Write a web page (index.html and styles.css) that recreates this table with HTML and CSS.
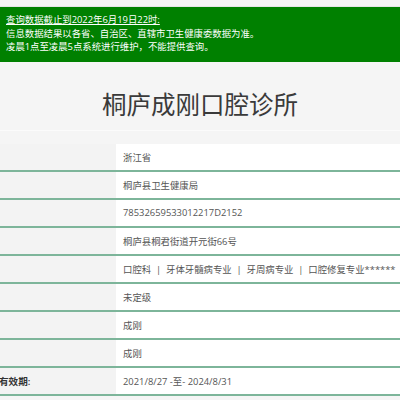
FILE: index.html
```
<!DOCTYPE html>
<html lang="zh-CN">
<head>
<meta charset="utf-8">
<link rel="stylesheet" href="styles.css">
</head>
<body>
<div class="top"></div>
<div class="notice">
  <div class="notice-line underline">查询数据截止到2022年6月19日22时:</div>
  <div class="notice-line">信息数据结果以各省、自治区、直辖市卫生健康委数据为准。</div>
  <div class="notice-line">凌晨1点至凌晨5点系统进行维护，不能提供查询。</div>
</div>
<div class="title">桐庐成刚口腔诊所</div>
<div class="table">
  <div class="row"><div class="label"></div><div class="value">浙江省</div></div>
  <div class="row"><div class="label"></div><div class="value">桐庐县卫生健康局</div></div>
  <div class="row"><div class="label"></div><div class="value">78532659533012217D2152</div></div>
  <div class="row"><div class="label"></div><div class="value">桐庐县桐君街道开元街66号</div></div>
  <div class="row"><div class="label"></div><div class="value">口腔科 &nbsp;|&nbsp; 牙体牙髓病专业 &nbsp;|&nbsp; 牙周病专业 &nbsp;|&nbsp; 口腔修复专业******</div></div>
  <div class="row"><div class="label"></div><div class="value">未定级</div></div>
  <div class="row"><div class="label"></div><div class="value">成刚</div></div>
  <div class="row"><div class="label"></div><div class="value">成刚</div></div>
  <div class="row"><div class="label"><span class="label-text">有效期:</span></div><div class="value">2021/8/27 -至- 2024/8/31</div></div>
</div>
</body>
</html>
```
FILE: styles.css
```
html, body {
  margin: 0;
  padding: 0;
  background: #f5f5f5;
  font-family: "Open Sans", "Noto Sans CJK SC", sans-serif;
  overflow: hidden;
}
.top {
  height: 7px;
  background: #f5f5f5;
  border-bottom: 1px solid #e6e6e6;
  box-sizing: border-box;
}
.notice {
  background: #008000;
  color: #ffffff;
  padding: 6px 6px 8px 6px;
  font-size: 9.4px;
  line-height: 13.5px;
}
.notice-line {
  white-space: nowrap;
}
.underline {
  text-decoration: underline;
}
.title {
  padding: 27px 0 11px 0;
  line-height: 30px;
  font-size: 24.5px;
  color: #3a3a3a;
  text-align: center;
  font-family: "Noto Sans CJK SC", sans-serif;
  border-bottom: 1px solid #fbfbfb;
}
.table {
  margin-top: 13px;
}
.row {
  display: flex;
  height: 28px;
  box-sizing: border-box;
  border-bottom: 2px solid #7db59a;
}
.label {
  width: 116px;
  flex: none;
  background: #f3f3f3;
  display: flex;
  align-items: center;
  overflow: hidden;
}
.label-text {
  font-size: 9.6px;
  font-weight: 600;
  color: #333333;
  margin-left: -1px;
  white-space: nowrap;
}
.value {
  flex: 1;
  background: #ffffff;
  display: flex;
  align-items: center;
  padding-left: 7px;
  font-size: 9.4px;
  color: #555555;
  white-space: nowrap;
  overflow: hidden;
}
```
